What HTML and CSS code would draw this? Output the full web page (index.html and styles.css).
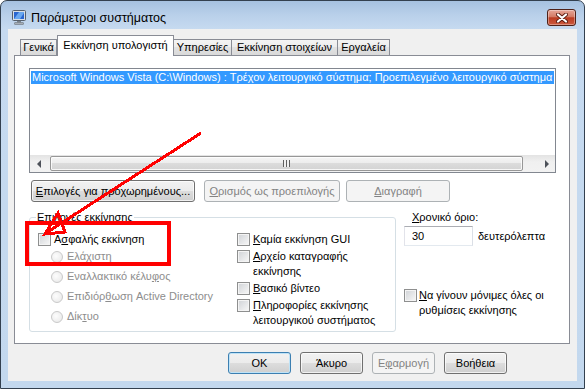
FILE: index.html
```html
<!DOCTYPE html>
<html>
<head>
    <meta charset="utf-8">
    <title>Παράμετροι συστήματος</title>
    <link rel="stylesheet" href="styles.css">
</head>
<body>

<div class="window">
    <!-- Title bar -->
    <div class="titlebar">
        <svg class="app-icon" viewBox="0 0 14 15" width="14" height="15">
            <rect x="0.5" y="0.5" width="13" height="10" rx="1" fill="#d9dfe6" stroke="#56606c"/>
            <rect x="2" y="2" width="10" height="7" fill="#2a66cf"/>
            <path d="M2 9 L7 2 L12 2 L12 3 L8 9 Z" fill="#6aa8f0"/>
            <rect x="5" y="11" width="4" height="1.5" fill="#7a828b"/>
            <rect x="2.5" y="12.5" width="9" height="2" rx="0.5" fill="#a7aeb6" stroke="#5c646d" stroke-width="0.5"/>
        </svg>
        <span class="title">Παράμετροι συστήματος</span>
        <div class="close-btn">
            <svg viewBox="0 0 12 10" width="12" height="10">
                <path d="M2 1.5 L10 8.5 M10 1.5 L2 8.5" stroke="#5b1d12" stroke-width="4" stroke-linecap="round"/>
                <path d="M2 1.5 L10 8.5 M10 1.5 L2 8.5" stroke="#ffffff" stroke-width="2.2" stroke-linecap="round"/>
            </svg>
        </div>
    </div>

    <div class="client">
        <!-- Tabs -->
        <div class="tabs">
            <div class="tab tab-general">Γενικά</div>
            <div class="tab tab-boot active">Εκκίνηση υπολογιστή</div>
            <div class="tab tab-services">Υπηρεσίες</div>
            <div class="tab tab-startup">Εκκίνηση στοιχείων</div>
            <div class="tab tab-tools">Εργαλεία</div>
        </div>

        <div class="panel">
            <!-- OS list -->
            <div class="listbox">
                <div class="list-item selected">Microsoft Windows Vista (C:\Windows) : Τρέχον λειτουργικό σύστημα; Προεπιλεγμένο λειτουργικό σύστημα</div>
                <div class="hscroll">
                    <div class="scroll-arrow"><span class="tri-left"></span></div>
                    <div class="track">
                        <div class="thumb"><span class="grip"></span></div>
                    </div>
                    <div class="scroll-arrow"><span class="tri-right"></span></div>
                </div>
            </div>

            <div class="button-row">
                <button class="btn btn-advanced"><u>Ε</u>πιλογές για προχωρημένους...</button>
                <button class="btn btn-setdefault" disabled><u>Ο</u>ρισμός ως προεπιλογής</button>
                <button class="btn btn-delete" disabled><u>Δ</u>ιαγραφή</button>
            </div>

            <div class="options">
                <!-- Boot options group -->
                <div class="group">
                    <div class="group-title">Επιλογές εκκίνησης</div>
                    <div class="group-body">
                        <div class="col-left">
                            <div class="check"><span class="box"></span><span>Α<u>σ</u>φαλής εκκίνηση</span></div>
                            <div class="radio-list">
                                <div class="radio"><span class="dot"></span><span>Ελά<u>χ</u>ιστη</span></div>
                                <div class="radio"><span class="dot"></span><span>Εναλλακτικό κέλυ<u>φ</u>ος</span></div>
                                <div class="radio"><span class="dot"></span><span>Επιδιόρ<u>θ</u>ωση Active Directory</span></div>
                                <div class="radio"><span class="dot"></span><span>Δίκ<u>τ</u>υο</span></div>
                            </div>
                        </div>
                        <div class="col-right">
                            <div class="check"><span class="box"></span><span><u>Κ</u>αμία εκκίνηση GUI</span></div>
                            <div class="check"><span class="box"></span><span><u>Α</u>ρχείο καταγραφής<br>εκκίνησης</span></div>
                            <div class="check"><span class="box"></span><span><u>Β</u>ασικό βίντεο</span></div>
                            <div class="check"><span class="box"></span><span><u>Π</u>ληροφορίες εκκίνησης<br>λειτουργικού συστήματος</span></div>
                        </div>
                    </div>
                </div>

                <!-- Timeout -->
                <div class="side">
                    <div class="timeout-label"><u>Χ</u>ρονικό όριο:</div>
                    <div class="timeout-row">
                        <input type="text" class="timeout-input" value="30">
                        <span class="timeout-unit">δευτερόλεπτα</span>
                    </div>
                    <div class="check persist"><span class="box"></span><span><u>Ν</u>α γίνουν μόνιμες όλες οι<br>ρυθμίσεις εκκίνησης</span></div>
                </div>
            </div>
        </div>

        <div class="dialog-buttons">
            <button class="btn btn-ok">OK</button>
            <button class="btn">Άκυρο</button>
            <button class="btn" disabled>Ε<u>φ</u>αρμογή</button>
            <button class="btn">Βοήθεια</button>
        </div>
    </div>
</div>

<!-- Red annotation drawn over the dialog -->
<svg class="annotation" width="585" height="389" viewBox="0 0 585 389">
    <rect x="27" y="223" width="142" height="41" fill="none" stroke="#ff0000" stroke-width="4" shape-rendering="crispEdges"/>
    <line x1="201" y1="133" x2="46" y2="233" stroke="#ff0000" stroke-width="3" shape-rendering="crispEdges"/>
    <polygon points="45,234 58,213 65,232" fill="none" stroke="#ff0000" stroke-width="3" shape-rendering="crispEdges"/>
</svg>

</body>
</html>
```

FILE: styles.css
```css
* {
    box-sizing: border-box;
}

body {
    margin: 0;
    font-family: "Liberation Sans", Arial, sans-serif;
    font-size: 11px;
    color: #000;
    position: relative;
}

.window {
    width: 585px;
    height: 389px;
    border: 1px solid #33404f;
    border-radius: 7px 7px 0 0;
    background: linear-gradient(to bottom, #a6c1e0 0, #b9d0ea 14px, #c6daf0 28px, #c3d8ee 100%);
    overflow: hidden;
}

.titlebar {
    height: 28px;
    display: flex;
    align-items: flex-start;
    padding-left: 11px;
}

.app-icon {
    margin-top: 9px;
    flex: none;
}

.title {
    margin-top: 10px;
    margin-left: 5px;
    font-size: 12.5px;
    line-height: 14px;
}

.close-btn {
    margin-left: auto;
    margin-right: 8px;
    margin-top: 8px;
    width: 29px;
    height: 17px;
    border: 1px solid #4f2118;
    border-radius: 3px;
    background: linear-gradient(#e6a698, #d47b66 45%, #bb3c22 52%, #cc5a3f 100%);
    box-shadow: inset 0 0 0 1px rgba(255, 255, 255, 0.35);
    display: flex;
    align-items: center;
    justify-content: center;
}

.client {
    margin: 0 7px;
    height: 352px;
    background: #f0f0f0;
    padding: 6px 7px 0 6px;
}

/* Tabs */
.tabs {
    display: flex;
    align-items: flex-end;
    height: 20px;
    padding-left: 6px;
}

.tab {
    height: 16px;
    border: 1px solid #898c95;
    border-bottom: none;
    border-left: none;
    background: linear-gradient(#f4f4f4, #ececec 50%, #e2e2e2 50%, #d9d9d9);
    line-height: 15px;
    text-align: center;
    white-space: nowrap;
}

.tab-general {
    width: 37px;
    border-left: 1px solid #898c95;
}

.tab-boot {
    width: 117px;
}

.tab-services {
    width: 58px;
}

.tab-startup {
    width: 106px;
}

.tab-tools {
    width: 52px;
}

.tab.active {
    height: 21px;
    margin-bottom: -1px;
    border-left: 1px solid #898c95;
    background: #fff;
    line-height: 19px;
    position: relative;
    z-index: 1;
}

.panel {
    height: 289px;
    border: 1px solid #898c95;
    background: #fff;
    padding: 12px 13px 0 14px;
}

/* List box */
.listbox {
    height: 105px;
    border: 1px solid #828790;
    padding: 2px 0 0 0;
    display: flex;
    flex-direction: column;
}

.list-item {
    margin: 0 1px;
    height: 13px;
    line-height: 13px;
    padding-left: 1px;
    white-space: nowrap;
    overflow: hidden;
}

.list-item.selected {
    background: #3399ff;
    color: #fff;
}

.hscroll {
    margin-top: auto;
    height: 17px;
    display: flex;
    background: linear-gradient(#e3e3e3, #f0f0f0 40%, #f2f2f2);
}

.scroll-arrow {
    width: 17px;
    flex: none;
    display: flex;
    align-items: center;
    justify-content: center;
}

.tri-left {
    border-top: 4px solid transparent;
    border-bottom: 4px solid transparent;
    border-right: 4px solid #4d5159;
}

.tri-right {
    border-top: 4px solid transparent;
    border-bottom: 4px solid transparent;
    border-left: 4px solid #4d5159;
}

.track {
    flex: 1;
    padding: 1px 15px 1px 3px;
}

.thumb {
    height: 100%;
    border: 1px solid #979797;
    border-radius: 2px;
    background: linear-gradient(#f5f5f5, #ececec 50%, #dcdcdc 50%, #d3d3d3);
    box-shadow: inset 0 0 0 1px rgba(255, 255, 255, 0.8);
    display: flex;
    align-items: center;
    justify-content: center;
}

.grip {
    width: 7px;
    height: 7px;
    background: repeating-linear-gradient(to right, #606060 0, #606060 1px, #f0f0f0 1px, #f0f0f0 3px);
}

/* Buttons */
.btn {
    height: 22px;
    padding: 0;
    border: 1px solid #707070;
    border-radius: 3px;
    background: linear-gradient(#f2f2f2, #ebebeb 50%, #dddddd 50%, #cfcfcf);
    box-shadow: inset 0 0 0 1px rgba(255, 255, 255, 0.7);
    font-family: inherit;
    font-size: 11px;
    color: #000;
    white-space: nowrap;
}

.btn:disabled {
    border-color: #adb2b5;
    background: #f4f4f4;
    box-shadow: none;
    color: #838383;
}

.button-row {
    display: flex;
    margin-top: 7px;
    padding-left: 2px;
}

.btn-advanced {
    width: 164px;
}

.btn-setdefault {
    width: 136px;
    margin-left: 9px;
}

.btn-delete {
    width: 104px;
    margin-left: 6px;
}

/* Options area */
.options {
    display: flex;
    align-items: flex-start;
    margin-top: 8px;
}

.group {
    width: 367px;
    height: 115px;
    margin-top: 7px;
    border: 1px solid #d5dfe5;
    border-radius: 3px;
    padding: 0 8px;
}

.group-title {
    width: fit-content;
    margin: -8px 0 0 -2px;
    padding: 0 1px;
    background: #fff;
    line-height: 15px;
}

.group-body {
    display: flex;
    margin-top: 7px;
}

.col-left {
    width: 199px;
    flex: none;
}

.col-right {
    display: flex;
    flex-direction: column;
    gap: 2px;
}

.check {
    display: flex;
    align-items: flex-start;
    line-height: 15px;
}

.box {
    width: 13px;
    height: 13px;
    flex: none;
    margin-top: 1px;
    margin-right: 3px;
    border: 1px solid #8e8f8f;
    background: linear-gradient(135deg, #cfd2d6, #f8f8f8);
    box-shadow: inset 0 0 0 1px #f4f4f4;
}

.radio-list {
    margin: 2px 0 0 13px;
    display: flex;
    flex-direction: column;
    gap: 5px;
}

.radio {
    display: flex;
    align-items: flex-start;
    line-height: 15px;
    color: #8d8d8d;
}

.dot {
    width: 12px;
    height: 12px;
    flex: none;
    margin-top: 2px;
    margin-right: 4px;
    border: 1px solid #c9c9c9;
    border-radius: 50%;
    background: radial-gradient(circle at 40% 40%, #fdfdfd, #e6e6e6);
}

.side {
    margin-left: 8px;
}

.timeout-label {
    padding-left: 8px;
    line-height: 15px;
}

.timeout-row {
    display: flex;
    align-items: center;
    margin-top: 1px;
}

.timeout-input {
    width: 69px;
    height: 20px;
    border: 1px solid #abadb3;
    border-color: #abadb3 #dbdfe6 #e3e9ef #e2e3ea;
    padding: 0 0 0 7px;
    font-family: inherit;
    font-size: 11px;
    background: #fff;
}

.timeout-unit {
    margin-left: 5px;
}

.persist {
    margin-top: 42px;
}

.persist .box {
    margin-right: 2px;
}

/* Dialog buttons */
.dialog-buttons {
    display: flex;
    justify-content: flex-end;
    gap: 9px;
    margin-top: 8px;
    padding-right: 63px;
}

.dialog-buttons .btn {
    width: 63px;
}

.btn-ok {
    border-color: #3c7fb1;
    box-shadow: inset 0 0 0 1px #bfe3f7;
}

.annotation {
    position: absolute;
    top: 0;
    left: 0;
    pointer-events: none;
}
```
